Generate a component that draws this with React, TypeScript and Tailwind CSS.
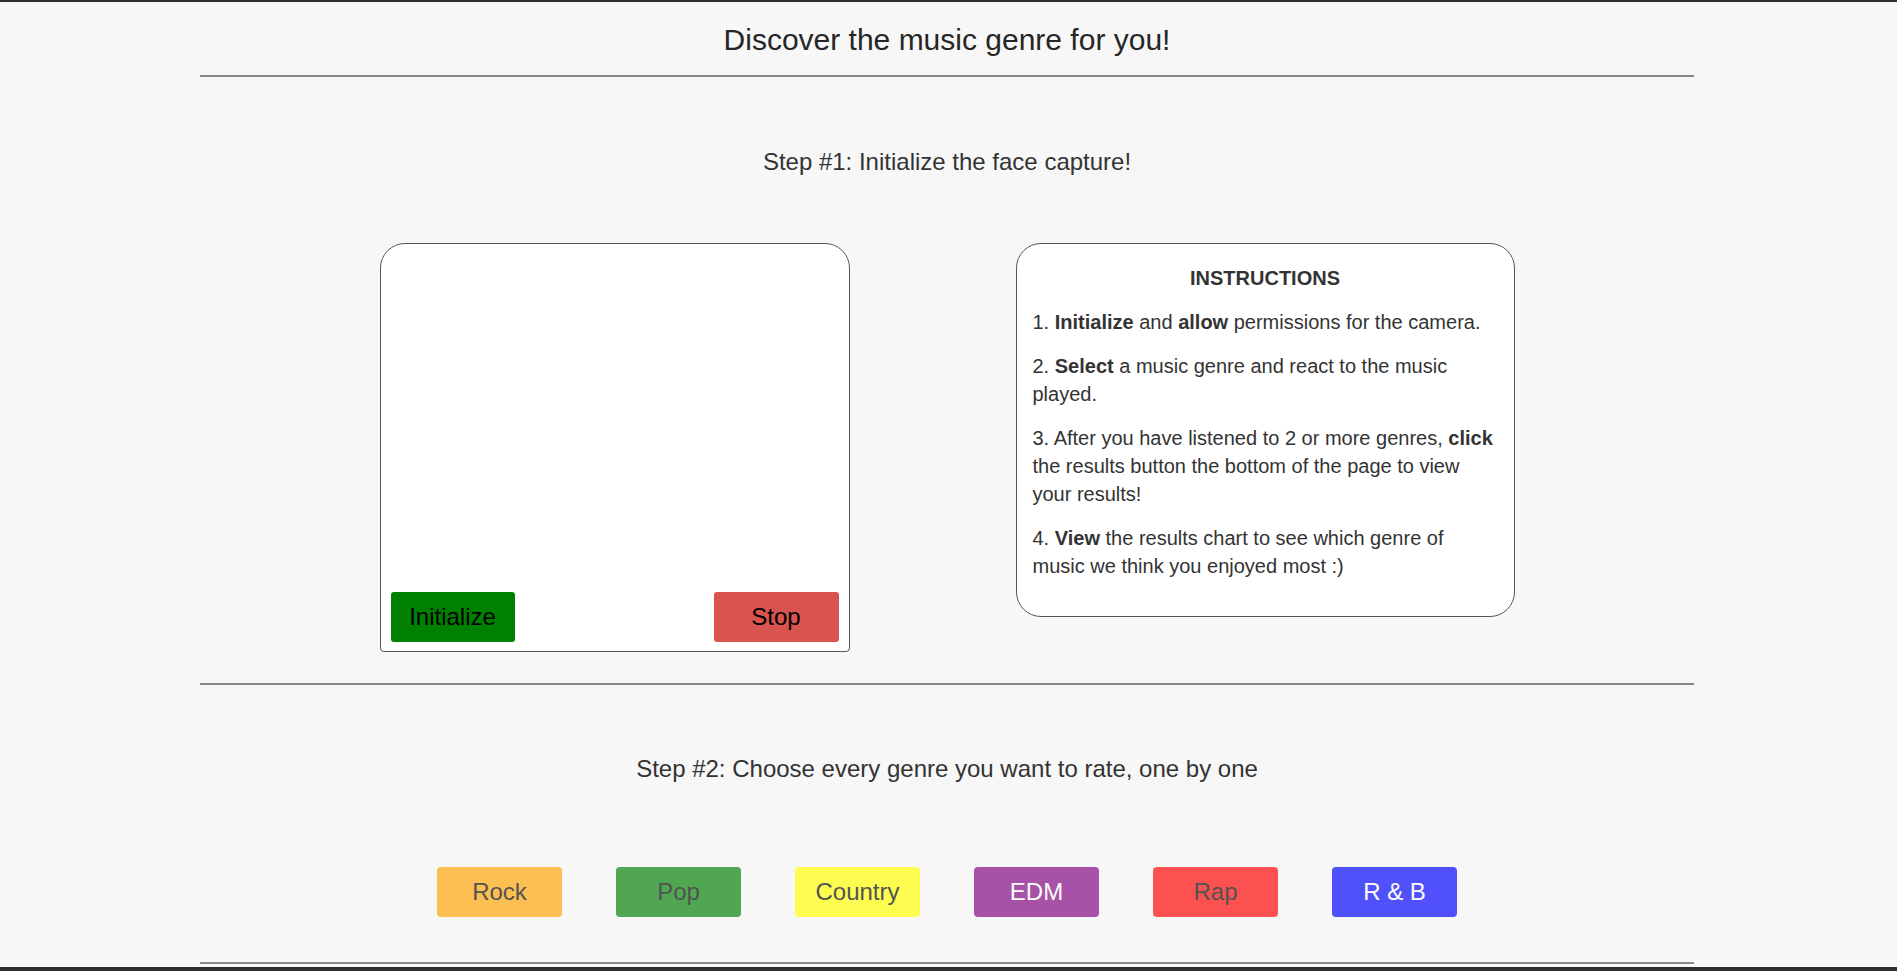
const genres = [
  { name: "Rock", bg: "bg-[#ffa500]", fg: "text-black" },
  { name: "Pop", bg: "bg-[#008000]", fg: "text-black" },
  { name: "Country", bg: "bg-[#ffff00]", fg: "text-black" },
  { name: "EDM", bg: "bg-[#800080]", fg: "text-white" },
  { name: "Rap", bg: "bg-[#ff0000]", fg: "text-black" },
  { name: "R & B", bg: "bg-[#0000ff]", fg: "text-white" },
];

function Rule({ className = "" }: { className?: string }) {
  return <div className={`h-[2px] w-[1494px] mx-auto bg-[#888888] ${className}`} />;
}

export default function App() {
  return (
    <div
      className="h-[971px] overflow-hidden bg-[#f7f7f7] border-t-2 border-b-4 border-[#2e2e2e] text-[#333333] pr-[3px]"
      style={{ fontFamily: '"Liberation Sans", Arial, sans-serif' }}
    >
      <h1 className="pt-[21px] text-center text-[30px] leading-[34px] text-[#262626]">
        Discover the music genre for you!
      </h1>
      <Rule className="mt-[18px]" />

      {/* Step 1 */}
      <h2 className="mt-[71px] text-center text-[24px] leading-[28px]">
        Step #1: Initialize the face capture!
      </h2>

      <div className="mt-[67px] flex justify-center items-start gap-[166px]">
        <div className="w-[470px] h-[409px] bg-white border border-[#555555] rounded-t-[25px] rounded-b-[4px] flex flex-col justify-end">
          <div className="flex justify-between px-[10px] pb-[9px]">
            <button className="w-[124px] h-[50px] rounded-[3px] bg-[#008000] text-black text-[24px]">
              Initialize
            </button>
            <button className="w-[125px] h-[50px] rounded-[3px] bg-[#d9534f] text-black text-[24px]">
              Stop
            </button>
          </div>
        </div>

        <div className="w-[499px] h-[374px] bg-white border border-[#555555] rounded-[25px] pt-[20px] px-[16px] text-[20px] leading-[28px]">
          <h3 className="text-center font-bold">INSTRUCTIONS</h3>
          <div className="mt-[16px] flex flex-col gap-[16px]">
            <p>
              1. <b>Initialize</b> and <b>allow</b> permissions for the camera.
            </p>
            <p>
              2. <b>Select</b> a music genre and react to the music played.
            </p>
            <p>
              3. After you have listened to 2 or more genres, <b>click</b> the results button the bottom of the
              page to view your results!
            </p>
            <p>
              4. <b>View</b> the results chart to see which genre of music we think you enjoyed most :)
            </p>
          </div>
        </div>
      </div>

      <Rule className="mt-[31px]" />

      {/* Step 2 */}
      <h2 className="mt-[70px] text-center text-[24px] leading-[28px]">
        Step #2: Choose every genre you want to rate, one by one
      </h2>

      <div className="mt-[84px] flex justify-center gap-[54px]">
        {genres.map((g) => (
          <button
            key={g.name}
            className={`w-[125px] h-[50px] rounded-[4px] opacity-[0.67] text-[24px] ${g.bg} ${g.fg}`}
          >
            {g.name}
          </button>
        ))}
      </div>

      <Rule className="mt-[45px]" />
    </div>
  );
}
